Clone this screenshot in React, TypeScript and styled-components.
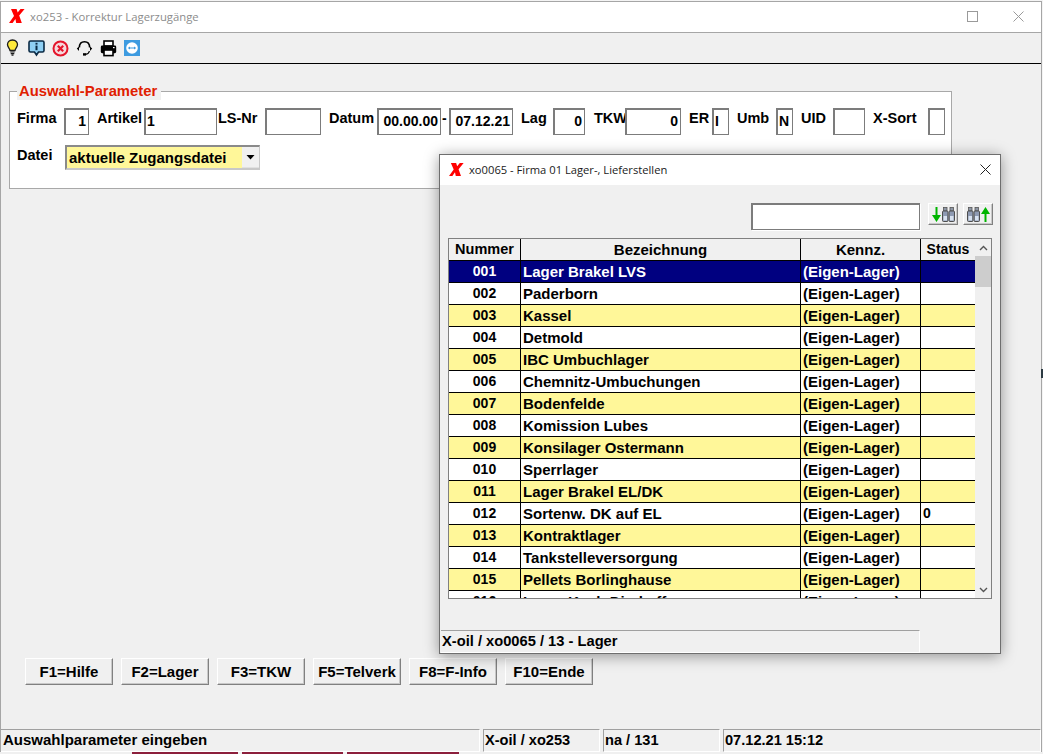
import styled, { createGlobalStyle } from "styled-components";

const GlobalStyle = createGlobalStyle`
    html, body {
        margin: 0;
        padding: 0;
        background: #f4f4f4;
    }
    body {
        font-family: "Liberation Sans", Arial, sans-serif;
    }
`

const Page = styled.div`
    position: relative;
    width: 1043px;
    height: 754px;
    overflow: hidden;
    background: #f4f4f4;
`

const Window = styled.div`
    box-sizing: border-box;
    width: 1042px;
    height: 751px;
    margin-top: 1px;
    border: 1px solid #a6a6a6;
    border-bottom: none;
    display: flex;
    flex-direction: column;
    background: #f0f0f0;
`

const TitleBar = styled.div`
    box-sizing: border-box;
    height: 31px;
    flex: none;
    display: flex;
    align-items: center;
    background: #ffffff;
    border-bottom: 1px solid #a6a6a6;
    padding: 0 0 2px 8px;
`

const TitleText = styled.span`
    font-family: "Open Sans", "Noto Sans", sans-serif;
    font-size: 11.3px;
    color: #8c8c8c;
    margin-left: 5px;
`

const WindowControls = styled.div`
    margin-left: auto;
    display: flex;
    align-items: center;
    gap: 35px;
    padding-right: 17px;
`

const ToolBar = styled.div`
    box-sizing: border-box;
    height: 31px;
    flex: none;
    display: flex;
    align-items: center;
    gap: 7px;
    padding-left: 3px;
    border-bottom: 1px solid #000000;
`

const Content = styled.div`
    flex: 1;
    display: flex;
    flex-direction: column;
    padding: 27px 0 0 8px;
`

const GroupBox = styled.div`
    position: relative;
    box-sizing: border-box;
    width: 943px;
    height: 98px;
    background: #ffffff;
    border: 1px solid #a8a8a8;
    padding: 16px 0 0 7px;
`

const Legend = styled.div`
    position: absolute;
    left: 7px;
    top: -9px;
    height: 17px;
    line-height: 16px;
    padding: 0 4px 0 2px;
    background: #f0f0f0;
    color: #e02000;
    font-size: 14.8px;
    font-weight: bold;
`

const FieldRow = styled.div`
    display: flex;
    align-items: flex-start;
`

const SecondRow = styled(FieldRow)`
    margin-top: 10px;
`

const Label = styled.div<{ $width: number; $gap?: number }>`
    width: ${(p) => p.$width}px;
    margin-left: ${(p) => p.$gap ?? 0}px;
    flex: none;
    font-size: 14.5px;
    font-weight: bold;
    line-height: 21px;
    color: #000000;
    white-space: nowrap;
`

const FieldBox = styled.div<{ $width: number; $align?: string }>`
    box-sizing: border-box;
    width: ${(p) => p.$width}px;
    height: 27px;
    flex: none;
    background: #ffffff;
    border: 1px solid #7c7c7c;
    border-top-width: 2px;
    border-left-width: 2px;
    padding: 0 2px 0 1px;
    text-align: ${(p) => p.$align ?? "right"};
    font-size: 14px;
    font-weight: bold;
    line-height: 23px;
    color: #000000;
    white-space: nowrap;
    overflow: hidden;
`

const Dash = styled.div`
    width: 8px;
    flex: none;
    font-size: 14px;
    font-weight: bold;
    line-height: 21px;
    padding-left: 1px;
    box-sizing: border-box;
`

const ComboBox = styled.div`
    box-sizing: border-box;
    width: 195px;
    height: 25px;
    display: flex;
    background: #fff799;
    border: 2px solid #8a8a8a;
    border-right-width: 1px;
    border-bottom-color: #c8c8c8;
    border-right-color: #c8c8c8;
`

const ComboText = styled.div`
    flex: 1;
    padding-left: 2px;
    font-size: 15px;
    font-weight: bold;
    line-height: 21px;
`

const ComboButton = styled.div`
    width: 17px;
    background: #f0f0f0;
    display: flex;
    align-items: center;
    justify-content: center;
    border-bottom: 1px solid #e0e0e0;
`

const ButtonBar = styled.div`
    display: flex;
    gap: 8px;
    margin-top: 469px;
    padding-left: 16px;
`

const FunctionKey = styled.div`
    box-sizing: border-box;
    width: 88px;
    height: 27px;
    display: flex;
    align-items: center;
    justify-content: center;
    background: #f0f0f0;
    border: 1px solid;
    border-color: #ffffff #808080 #808080 #ffffff;
    box-shadow: inset -1px -1px 0 #c8c8c8;
    font-size: 15px;
    font-weight: bold;
    white-space: nowrap;
`

const StatusBar = styled.div`
    height: 23px;
    flex: none;
    display: flex;
    gap: 3px;
`

const StatusCell = styled.div<{ $width?: number }>`
    box-sizing: border-box;
    ${(p) => (p.$width ? `width: ${p.$width}px; flex: none;` : "flex: 1;")}
    border-top: 1px solid #a0a0a0;
    border-left: 1px solid #a0a0a0;
    border-bottom: 1px solid #ffffff;
    border-right: 1px solid #ffffff;
    padding-left: 1px;
    font-size: 14.6px;
    font-weight: bold;
    line-height: 20px;
    white-space: nowrap;
    overflow: hidden;
`

const FirstStatusCell = styled(StatusCell)`
    border-left: none;
    padding-left: 2px;
    font-size: 15px;
`

const BehindStrip = styled.div`
    display: flex;
    gap: 4px;
    height: 2px;
    padding-left: 132px;
    background: #f0f0f0;
`

const BehindTab = styled.div<{ $width: number }>`
    width: ${(p) => p.$width}px;
    background: #8c1f3c;
`

const EdgeMark = styled.div`
    position: absolute;
    right: 0;
    top: 369px;
    width: 2px;
    height: 9px;
    background: #2c3a42;
`

const Dialog = styled.div`
    position: absolute;
    left: 439px;
    top: 154px;
    box-sizing: border-box;
    width: 562px;
    height: 500px;
    display: flex;
    flex-direction: column;
    background: #f0f0f0;
    border: 1px solid #6e6e6e;
    box-shadow: 0 2px 14px rgba(0, 0, 0, 0.4);
`

const DialogTitle = styled.div`
    box-sizing: border-box;
    height: 30px;
    flex: none;
    display: flex;
    align-items: center;
    background: #ffffff;
    padding: 0 0 2px 9px;
`

const DialogTitleText = styled.span`
    font-family: "Open Sans", "Noto Sans", sans-serif;
    font-size: 11.2px;
    color: #1a1a1a;
    margin-left: 5px;
`

const DialogClose = styled.div`
    margin-left: auto;
    margin-right: 9px;
    display: flex;
`

const SearchRow = styled.div`
    box-sizing: border-box;
    display: flex;
    align-items: flex-start;
    height: 53px;
    flex: none;
    padding: 18px 0 0 311px;
`

const SearchBox = styled.div`
    box-sizing: border-box;
    width: 169px;
    height: 27px;
    flex: none;
    background: #ffffff;
    border: 1px solid #7c7c7c;
    border-top-width: 2px;
    border-left-width: 2px;
    box-shadow: 1px 1px 0 #ffffff;
    margin-right: 8px;
`

const SearchButton = styled.div`
    box-sizing: border-box;
    width: 30px;
    height: 22px;
    flex: none;
    margin-right: 5px;
    display: flex;
    align-items: center;
    justify-content: center;
    gap: 1px;
    background: #f0f0f0;
    border: 1px solid;
    border-color: #ffffff #808080 #808080 #ffffff;
    box-shadow: inset -1px -1px 0 #c8c8c8;
`

const ListFrame = styled.div`
    box-sizing: border-box;
    width: 544px;
    height: 361px;
    margin-left: 8px;
    flex: none;
    display: flex;
    border: 1px solid #808080;
    background: #ffffff;
    overflow: hidden;
`

const ListColumn = styled.div`
    flex: 1;
    min-width: 0;
`

const ListGrid = styled.div<{ $bg: string; $color: string }>`
    display: grid;
    grid-template-columns: 72px 280px 120px 54px;
    height: 22px;
    box-sizing: border-box;
    background: ${(p) => p.$bg};
    color: ${(p) => p.$color};
    border-bottom: 1px solid #000000;
    font-weight: bold;
    line-height: 21px;
`

const Cell = styled.div<{ $center?: boolean; $size?: number }>`
    box-sizing: border-box;
    border-right: 1px solid #000000;
    padding-left: ${(p) => (p.$center ? 0 : 2)}px;
    font-size: ${(p) => p.$size ?? 15}px;
    text-align: ${(p) => (p.$center ? "center" : "left")};
    white-space: nowrap;
    overflow: hidden;
`

const LastCell = styled(Cell)`
    border-right: none;
`

const ScrollTrack = styled.div`
    width: 16px;
    flex: none;
    display: flex;
    flex-direction: column;
    background: #f0f0f0;
`

const ScrollArrow = styled.div`
    height: 17px;
    flex: none;
    display: flex;
    align-items: center;
    justify-content: center;
`

const ScrollThumb = styled.div`
    height: 31px;
    flex: none;
    background: #cdcdcd;
`

const ScrollGap = styled.div`
    flex: 1;
`

const DialogFooter = styled.div`
    margin-top: 31px;
    display: flex;
`

const FooterCell = styled.div`
    box-sizing: border-box;
    width: 479px;
    height: 23px;
    margin-left: 1px;
    border-top: 1px solid #a0a0a0;
    border-right: 1px solid #ffffff;
    border-bottom: 1px solid #ffffff;
    padding-left: 1px;
    font-size: 14.7px;
    font-weight: bold;
    line-height: 21px;
`

const XLogo = ({ size = 16 }: { size?: number }) => (
    <svg width={size} height={size} viewBox="0 0 16 16">
        <path d="M2 1 H7.6 L8.7 4.6 L11.5 1 H15.6 L10.2 7.6 L12.8 15 H7.2 L6.4 11 L3.6 15 H0 L5 8 Z" fill="#ff0000" />
    </svg>
)

const Bulb = () => (
    <svg width="17" height="18" viewBox="0 0 17 18">
        <path d="M8.5 1 C5.1 1 3.5 3.4 3.5 5.6 C3.5 8 5.5 9.2 6 11.5 L11 11.5 C11.5 9.2 13.5 8 13.5 5.6 C13.5 3.4 11.9 1 8.5 1 Z" fill="#ffe93a" stroke="#1c1c1c" strokeWidth="1.3" />
        <path d="M6.3 13 H10.7 M6.7 14.6 H10.3 M7.5 16.2 H9.5" stroke="#1c1c1c" strokeWidth="1.2" />
    </svg>
)

const InfoBubble = () => (
    <svg width="17" height="17" viewBox="0 0 17 17">
        <path d="M2.5 1 H14.5 Q16 1 16 2.5 V10.5 Q16 12 14.5 12 H10.5 L8.5 15 L6.5 12 H2.5 Q1 12 1 10.5 V2.5 Q1 1 2.5 1 Z" fill="#8fd0f4" stroke="#0b2a44" strokeWidth="1.6" />
        <rect x="7.5" y="2.8" width="2" height="1.8" fill="#0b2a44" />
        <rect x="7.5" y="5.6" width="2" height="4.6" fill="#0b2a44" />
    </svg>
)

const CancelCircle = () => (
    <svg width="17" height="17" viewBox="0 0 17 17">
        <circle cx="8.5" cy="8.5" r="7" fill="#f6d8dc" stroke="#e4152b" strokeWidth="2" />
        <path d="M5.8 5.8 L11.2 11.2 M11.2 5.8 L5.8 11.2" stroke="#e4152b" strokeWidth="2.2" />
    </svg>
)

const Headset = () => (
    <svg width="17" height="17" viewBox="0 0 17 17" fill="none">
        <path d="M3.4 7.5 C3.4 3.8 5.6 1.8 8.5 1.8 C11.4 1.8 13.6 3.8 13.6 7.5" stroke="#000" strokeWidth="1.5" />
        <path d="M3 6.4 L0.8 8.6 L3 11 Z M14 6.4 L16.2 8.6 L14 11 Z" fill="#000" />
        <path d="M13.4 11 C13 13 11.6 14.2 9.6 14.4" stroke="#000" strokeWidth="1.2" />
        <rect x="7" y="13.2" width="3" height="2.4" fill="#000" />
    </svg>
)

const Printer = () => (
    <svg width="17" height="17" viewBox="0 0 17 17">
        <rect x="4" y="1" width="9" height="5" fill="#fff" stroke="#000" strokeWidth="1.6" />
        <rect x="0.8" y="5.6" width="15.4" height="7.6" rx="1.4" fill="#000" />
        <rect x="4" y="10" width="9" height="5.6" fill="#fff" stroke="#000" strokeWidth="1.6" />
        <rect x="13" y="7" width="1.6" height="1.2" fill="#fff" />
    </svg>
)

const TeamViewer = () => (
    <svg width="16" height="16" viewBox="0 0 16 16">
        <rect width="16" height="16" fill="#3d9be0" />
        <circle cx="8" cy="8" r="5.8" fill="#ffffff" />
        <path d="M3.8 8 L6 6.4 V7.4 H10 V6.4 L12.2 8 L10 9.6 V8.6 H6 V9.6 Z" fill="#3d9be0" />
    </svg>
)

const Binocular = () => (
    <svg width="13" height="15" viewBox="0 0 13 15">
        <rect x="1.5" y="0.5" width="3.5" height="3.5" fill="#8e97a6" stroke="#555" strokeWidth="0.8" />
        <rect x="8" y="0.5" width="3.5" height="3.5" fill="#8e97a6" stroke="#555" strokeWidth="0.8" />
        <rect x="0.5" y="4" width="5.5" height="10.5" rx="1" fill="#8e9ab2" stroke="#4e4e4e" />
        <rect x="7" y="4" width="5.5" height="10.5" rx="1" fill="#8e9ab2" stroke="#4e4e4e" />
        <rect x="1.5" y="9" width="3.5" height="4.5" fill="#d8e2f0" />
        <rect x="8" y="9" width="3.5" height="4.5" fill="#d8e2f0" />
    </svg>
)

const Arrow = ({ up }: { up?: boolean }) => (
    <svg width="9" height="15" viewBox="0 0 9 15">
        <path
            d={up ? "M4.5 0 L9 7 H5.5 V15 H3.5 V7 H0 Z" : "M4.5 15 L9 8 H5.5 V0 H3.5 V8 H0 Z"}
            fill="#00b400"
        />
    </svg>
)

const Chevron = ({ up }: { up?: boolean }) => (
    <svg width="9" height="6" viewBox="0 0 9 6" fill="none">
        <path d={up ? "M1 5 L4.5 1.5 L8 5" : "M1 1 L4.5 4.5 L8 1"} stroke="#555" strokeWidth="1.4" />
    </svg>
)

type Row = {
    nr: string;
    name: string;
    status?: string;
}

const rows: Row[] = [
    { nr: "001", name: "Lager Brakel LVS" },
    { nr: "002", name: "Paderborn" },
    { nr: "003", name: "Kassel" },
    { nr: "004", name: "Detmold" },
    { nr: "005", name: "IBC Umbuchlager" },
    { nr: "006", name: "Chemnitz-Umbuchungen" },
    { nr: "007", name: "Bodenfelde" },
    { nr: "008", name: "Komission Lubes" },
    { nr: "009", name: "Konsilager Ostermann" },
    { nr: "010", name: "Sperrlager" },
    { nr: "011", name: "Lager Brakel EL/DK" },
    { nr: "012", name: "Sortenw. DK auf EL", status: "0" },
    { nr: "013", name: "Kontraktlager" },
    { nr: "014", name: "Tankstelleversorgung" },
    { nr: "015", name: "Pellets Borlinghause" },
    { nr: "016", name: "Lager Koch Dierkoff" },
]

const fkeys = ["F1=Hilfe", "F2=Lager", "F3=TKW", "F5=Telverk", "F8=F-Info", "F10=Ende"]

const rowColors = (index: number) => {
    if (index === 0) return { bg: "#000080", color: "#ffffff" };
    return { bg: index % 2 === 0 ? "#fff799" : "#ffffff", color: "#000000" };
}

const App = () => {
    return (
        <Page>
            <GlobalStyle />
            <Window>
                <TitleBar>
                    <XLogo />
                    <TitleText>xo253 - Korrektur Lagerzugänge</TitleText>
                    <WindowControls>
                        <svg width="11" height="11" viewBox="0 0 11 11" fill="none">
                            <rect x="0.5" y="0.5" width="10" height="10" stroke="#9a9a9a" />
                        </svg>
                        <svg width="11" height="11" viewBox="0 0 11 11" fill="none">
                            <path d="M0.5 0.5 L10.5 10.5 M10.5 0.5 L0.5 10.5" stroke="#9a9a9a" />
                        </svg>
                    </WindowControls>
                </TitleBar>
                <ToolBar>
                    <Bulb />
                    <InfoBubble />
                    <CancelCircle />
                    <Headset />
                    <Printer />
                    <TeamViewer />
                </ToolBar>
                <Content>
                    <GroupBox>
                        <Legend>Auswahl-Parameter</Legend>
                        <FieldRow>
                            <Label $width={47}>Firma</Label>
                            <FieldBox $width={25}>1</FieldBox>
                            <Label $width={47} $gap={8}>Artikel</Label>
                            <FieldBox $width={73} $align="left">1</FieldBox>
                            <Label $width={47} $gap={1}>LS-Nr</Label>
                            <FieldBox $width={56} />
                            <Label $width={48} $gap={8}>Datum</Label>
                            <FieldBox $width={64}>00.00.00</FieldBox>
                            <Dash>-</Dash>
                            <FieldBox $width={64}>07.12.21</FieldBox>
                            <Label $width={32} $gap={8}>Lag</Label>
                            <FieldBox $width={32}>0</FieldBox>
                            <Label $width={31} $gap={9}>TKW</Label>
                            <FieldBox $width={56}>0</FieldBox>
                            <Label $width={23} $gap={8}>ER</Label>
                            <FieldBox $width={17} $align="left">I</FieldBox>
                            <Label $width={39} $gap={8}>Umb</Label>
                            <FieldBox $width={17} $align="left">N</FieldBox>
                            <Label $width={32} $gap={8}>UID</Label>
                            <FieldBox $width={32} />
                            <Label $width={55} $gap={8}>X-Sort</Label>
                            <FieldBox $width={17} />
                        </FieldRow>
                        <SecondRow>
                            <Label $width={48}>Datei</Label>
                            <ComboBox>
                                <ComboText>aktuelle Zugangsdatei</ComboText>
                                <ComboButton>
                                    <svg width="9" height="5" viewBox="0 0 9 5">
                                        <path d="M0.5 0 H8.5 L4.5 4.5 Z" fill="#000" />
                                    </svg>
                                </ComboButton>
                            </ComboBox>
                        </SecondRow>
                    </GroupBox>
                    <ButtonBar>
                        {fkeys.map((key) => (
                            <FunctionKey key={key}>{key}</FunctionKey>
                        ))}
                    </ButtonBar>
                </Content>
                <StatusBar>
                    <FirstStatusCell>Auswahlparameter eingeben</FirstStatusCell>
                    <StatusCell $width={117}>X-oil / xo253</StatusCell>
                    <StatusCell $width={117}>na / 131</StatusCell>
                    <StatusCell $width={318}>07.12.21 15:12</StatusCell>
                </StatusBar>
            </Window>
            <BehindStrip>
                <BehindTab $width={106} />
                <BehindTab $width={101} />
                <BehindTab $width={112} />
            </BehindStrip>
            <EdgeMark />
            <Dialog>
                <DialogTitle>
                    <XLogo size={15} />
                    <DialogTitleText>xo0065 - Firma 01 Lager-, Lieferstellen</DialogTitleText>
                    <DialogClose>
                        <svg width="11" height="11" viewBox="0 0 11 11" fill="none">
                            <path d="M0.5 0.5 L10.5 10.5 M10.5 0.5 L0.5 10.5" stroke="#222" />
                        </svg>
                    </DialogClose>
                </DialogTitle>
                <SearchRow>
                    <SearchBox />
                    <SearchButton>
                        <Arrow />
                        <Binocular />
                    </SearchButton>
                    <SearchButton>
                        <Binocular />
                        <Arrow up />
                    </SearchButton>
                </SearchRow>
                <ListFrame>
                    <ListColumn>
                        <ListGrid $bg="#f0f0f0" $color="#000000">
                            <Cell $center $size={14.5}>Nummer</Cell>
                            <Cell $center>Bezeichnung</Cell>
                            <Cell $center>Kennz.</Cell>
                            <LastCell $center $size={14}>Status</LastCell>
                        </ListGrid>
                        {rows.map((row, index) => {
                            const c = rowColors(index);
                            return (
                                <ListGrid key={row.nr} $bg={c.bg} $color={c.color}>
                                    <Cell $center $size={14}>{row.nr}</Cell>
                                    <Cell>{row.name}</Cell>
                                    <Cell>(Eigen-Lager)</Cell>
                                    <LastCell $size={14}>{row.status}</LastCell>
                                </ListGrid>
                            );
                        })}
                    </ListColumn>
                    <ScrollTrack>
                        <ScrollArrow><Chevron up /></ScrollArrow>
                        <ScrollThumb />
                        <ScrollGap />
                        <ScrollArrow><Chevron /></ScrollArrow>
                    </ScrollTrack>
                </ListFrame>
                <DialogFooter>
                    <FooterCell>X-oil / xo0065 / 13 - Lager</FooterCell>
                </DialogFooter>
            </Dialog>
        </Page>
    )
}

export default App
